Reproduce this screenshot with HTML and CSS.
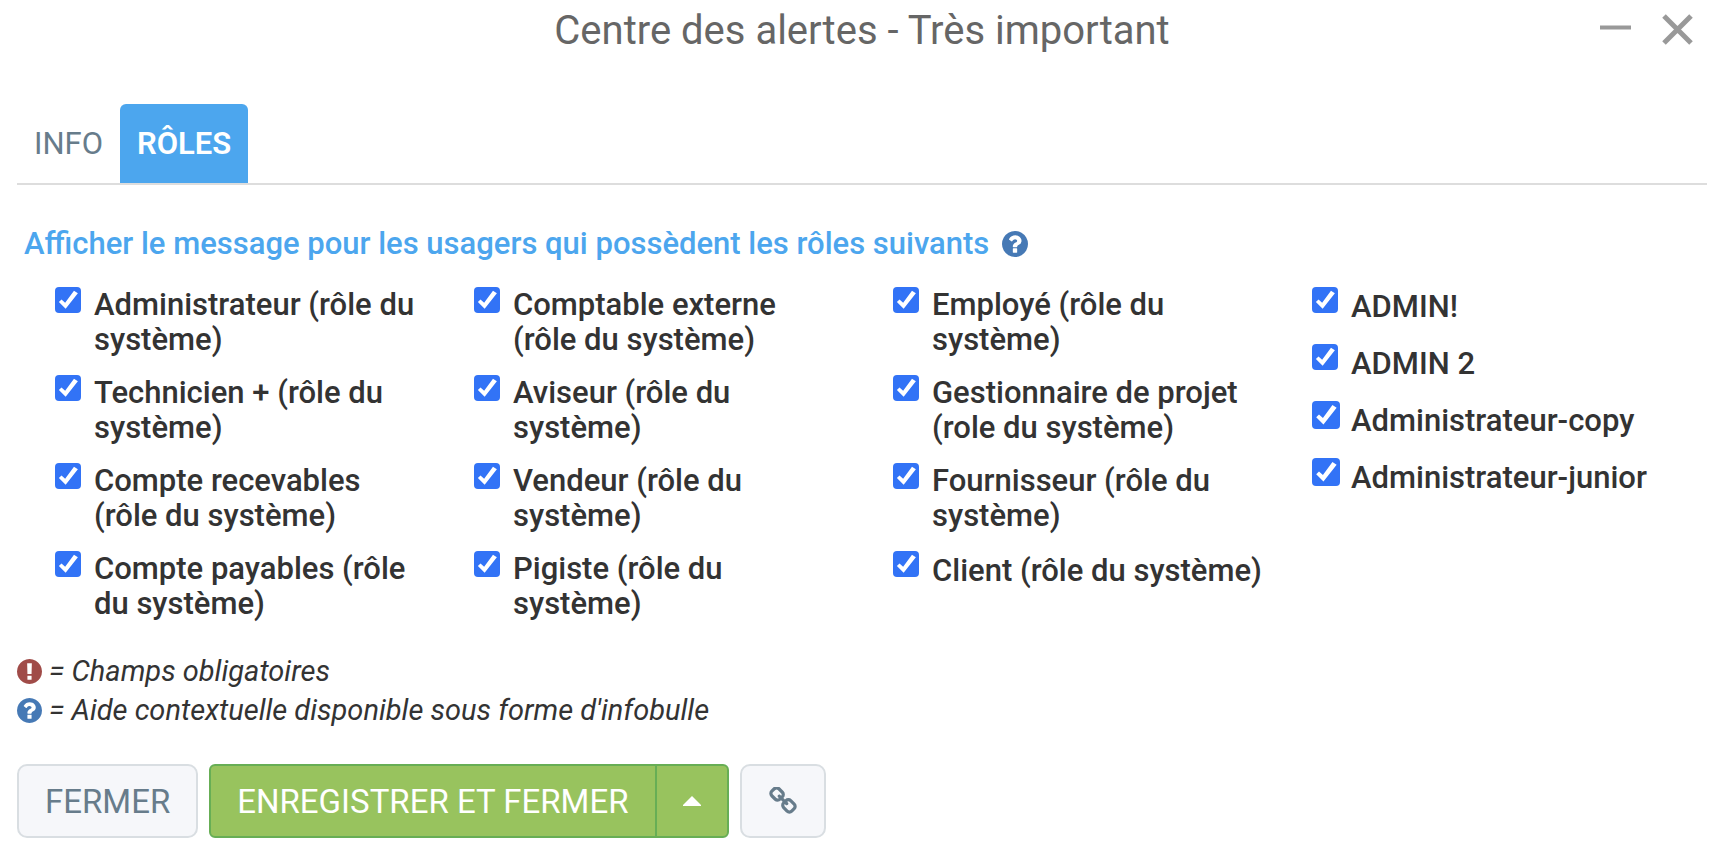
FILE: index.html
```html
<!DOCTYPE html>
<html lang="fr">
<head>
    <meta charset="UTF-8">
    <meta name="viewport" content="width=device-width, initial-scale=1.0">
    <title>Centre des alertes</title>
    <link rel="stylesheet" href="styles.css">
</head>
<body>
    <!-- icons used more than once -->
    <svg class="sprite" aria-hidden="true">
        <symbol id="icon-help" viewBox="128 128 1536 1536">
            <path d="M1024 1376v-192q0-14-9-23t-23-9h-192q-14 0-23 9t-9 23v192q0 14 9 23t23 9h192q14 0 23-9t9-23zm256-672q0-88-55.5-163t-138.5-116-170-41q-243 0-371 213-15 24 8 42l132 100q7 6 19 6 16 0 25-12 53-68 86-92 34-24 86-24 48 0 85.5 26t37.5 59q0 38-20 61t-68 45q-63 28-115.5 86.5t-52.5 125.5v36q0 14 9 23t23 9h192q14 0 23-9t9-23q0-19 21.5-49.5t54.5-49.5q32-18 49-28.5t46-35 44.5-48 28-60.5 12.5-81zm384 192q0 209-103 385.5t-279.5 279.5-385.5 103-385.5-103-279.5-279.5-103-385.5 103-385.5 279.5-279.5 385.5-103 385.5 103 279.5 279.5 103 385.5z"/>
        </symbol>
    </svg>

    <div class="modal">
        <header class="modal-header">
            <h1>Centre des alertes - Très important</h1>
            <div class="window-actions">
                <button type="button" aria-label="Réduire">
                    <svg width="32" height="32" viewBox="0 0 32 32"><path d="M0 13.500h31" stroke="#999" stroke-width="4"/></svg>
                </button>
                <button type="button" aria-label="Fermer">
                    <svg width="32" height="32" viewBox="0 0 32 32"><path d="M3 2l27 27M30 2L3 29" stroke="#999" stroke-width="5"/></svg>
                </button>
            </div>
        </header>

        <nav class="tabs">
            <a href="#info">INFO</a>
            <a href="#roles" class="active">RÔLES</a>
        </nav>

        <form class="roles" id="roles">
            <h2>Afficher le message pour les usagers qui possèdent les rôles suivants <svg class="icon-help"><use href="#icon-help"/></svg></h2>
            <div class="role-columns">
                <div class="role-column">
                    <label><input type="checkbox" checked><span>Administrateur (rôle du système)</span></label>
                    <label><input type="checkbox" checked><span>Technicien + (rôle du système)</span></label>
                    <label><input type="checkbox" checked><span>Compte recevables (rôle du système)</span></label>
                    <label><input type="checkbox" checked><span>Compte payables (rôle du système)</span></label>
                </div>
                <div class="role-column">
                    <label><input type="checkbox" checked><span>Comptable externe (rôle du système)</span></label>
                    <label><input type="checkbox" checked><span>Aviseur (rôle du système)</span></label>
                    <label><input type="checkbox" checked><span>Vendeur (rôle du système)</span></label>
                    <label><input type="checkbox" checked><span>Pigiste (rôle du système)</span></label>
                </div>
                <div class="role-column">
                    <label><input type="checkbox" checked><span>Employé (rôle du système)</span></label>
                    <label><input type="checkbox" checked><span>Gestionnaire de projet (role du système)</span></label>
                    <label><input type="checkbox" checked><span>Fournisseur (rôle du système)</span></label>
                    <label class="single"><input type="checkbox" checked><span>Client (rôle du système)</span></label>
                </div>
                <div class="role-column">
                    <label class="single"><input type="checkbox" checked><span>ADMIN!</span></label>
                    <label class="single"><input type="checkbox" checked><span>ADMIN 2</span></label>
                    <label class="single large"><input type="checkbox" checked><span>Administrateur-copy</span></label>
                    <label class="single large"><input type="checkbox" checked><span>Administrateur-junior</span></label>
                </div>
            </div>
        </form>

        <div class="legend">
            <p>
                <svg class="icon-required" viewBox="128 128 1536 1536"><path d="M896 128q209 0 385.5 103t279.5 279.5 103 385.5-103 385.5-279.5 279.5-385.5 103-385.5-103-279.5-279.5-103-385.5 103-385.5 279.5-279.5 385.5-103zm128 1247v-190q0-14-9-23.5t-22-9.5h-192q-13 0-23 10t-10 23v190q0 13 10 23t23 10h192q13 0 22-9.5t9-23.5zm-2-344l18-621q0-12-10-18-10-8-24-8h-220q-14 0-24 8-10 6-10 18l17 621q0 10 10 17.5t24 7.5h185q14 0 23.5-7.5t10.5-17.5z"/></svg>
                = Champs obligatoires
            </p>
            <p>
                <svg class="icon-help"><use href="#icon-help"/></svg>
                = Aide contextuelle disponible sous forme d'infobulle
            </p>
        </div>

        <footer class="actions">
            <button type="button" class="btn">FERMER</button>
            <div class="btn-group">
                <button type="button" class="btn btn-success">ENREGISTRER ET FERMER</button>
                <button type="button" class="btn btn-success btn-caret" aria-label="Plus d'options">
                    <svg width="18" height="10" viewBox="0 0 18 10"><path d="M9 0l9 9v1H0V9z" fill="#fff"/></svg>
                </button>
            </div>
            <button type="button" class="btn btn-link" aria-label="Lien">
                <svg width="28" height="28" viewBox="64 64 1664 1664"><path fill="#677c8b" d="M1520 1216q0-40-28-68l-208-208q-28-28-68-28-42 0-72 32 3 3 19 18.500t21.500 21.500 15 19 13 25.500 3.500 27.500q0 40-28 68t-68 28q-15 0-27.500-3.500t-25.500-13-19-15-21.500-21.500-18.500-19q-33 31-33 73 0 40 28 68l206 207q27 27 68 27 40 0 68-26l147-146q28-28 28-67zm-703-705q0-40-28-68l-206-207q-28-28-68-28-39 0-68 27l-147 146q-28 28-28 67 0 40 28 68l208 208q27 27 68 27 42 0 72-31-3-3-19-18.500t-21.500-21.500-15-19-13-25.500-3.500-27.500q0-40 28-68t68-28q15 0 27.500 3.500t25.500 13 19 15 21.500 21.500 18.500 19q33-31 33-73zm895 705q0 120-85 203l-147 146q-83 83-203 83-121 0-204-85l-206-207q-83-83-83-203 0-123 88-209l-88-88q-86 88-208 88-120 0-204-84l-208-208q-84-84-84-204t85-203l147-146q83-83 203-83 121 0 204 85l206 207q83 83 83 203 0 123-88 209l88 88q86-88 208-88 120 0 204 84l208 208q84 84 84 204z"/></svg>
            </button>
        </footer>
    </div>
</body>
</html>
```
FILE: styles.css
```css
* {
    box-sizing: border-box;
}

body {
    margin: 0;
    background-color: #fff;
    color: #333;
    font-family: Roboto, sans-serif;
    font-size: 31px;
}

h1, h2, p {
    margin: 0;
}

.sprite {
    display: none;
}

.modal {
    padding: 0 17px 12px;
}

/* header */
.modal-header {
    display: grid;
    grid-template-columns: 1fr auto 1fr;
    align-items: center;
    height: 60px;
    margin-bottom: 44px;
}

.modal-header h1 {
    grid-column: 2;
    color: #666;
    font-size: 40px;
    font-weight: 400;
}

.window-actions {
    display: flex;
    justify-content: flex-end;
    gap: 29px;
    padding-right: 14px;
}

.window-actions button {
    padding: 0;
    border: 0;
    background: none;
    line-height: 0;
    cursor: pointer;
}

/* tabs */
.tabs {
    display: flex;
    border-bottom: 2px solid #ddd;
}

.tabs a {
    padding: 0 17px;
    border-radius: 6px 6px 0 0;
    color: #677c8b;
    line-height: 79px;
    text-decoration: none;
}

.tabs .active {
    background-color: #4ca6ee;
    color: #fff;
    font-weight: 600;
}

/* roles */
.roles {
    padding: 39px 7px 0;
}

.roles h2 {
    display: flex;
    align-items: center;
    gap: 13px;
    margin-bottom: 23px;
    color: #4ca6ee;
    font-size: 31px;
    font-weight: 500;
    line-height: 40px;
}

.icon-help {
    width: 26px;
    height: 26px;
    fill: #4679b5;
}

.icon-required {
    fill: #a04b48;
}

.role-columns {
    display: grid;
    grid-template-columns: repeat(4, 1fr);
}

.role-column {
    padding: 0 17px 0 31px;
}

.role-column label {
    display: grid;
    grid-template-columns: 26px 1fr;
    gap: 13px;
    margin-bottom: 18px;
    font-weight: 500;
    line-height: 35px;
}

.role-column .single {
    line-height: 39px;
}

.role-column input {
    appearance: none;
    width: 26px;
    height: 26px;
    margin: 0;
    border: 1px solid #767676;
    border-radius: 4px;
}

.role-column .large input {
    width: 28px;
    height: 28px;
}

.role-column input:checked {
    border: 0;
    background-color: #3273f6;
}

.role-column input:checked::before {
    content: "";
    display: block;
    height: 100%;
    background-color: #fff;
    clip-path: polygon(15% 58%, 25% 48%, 39% 61%, 73% 14%, 88% 24%, 41% 84%);
}

/* legend */
.legend {
    margin-top: 13px;
    font-size: 29px;
    font-style: italic;
    line-height: 39px;
}

.legend p {
    display: flex;
    align-items: center;
    gap: 7px;
}

.legend svg {
    width: 25px;
    height: 25px;
}

/* buttons */
.actions {
    display: flex;
    gap: 11px;
    margin-top: 34px;
}

.btn-group {
    display: flex;
}

.btn {
    display: flex;
    align-items: center;
    justify-content: center;
    height: 74px;
    padding: 0 26px;
    border: 2px solid #d9dee2;
    border-radius: 10px;
    background-color: #f6f7fa;
    color: #677c8b;
    font-family: inherit;
    font-size: 33px;
    cursor: pointer;
}

.btn-success {
    border-color: #67ae55;
    border-radius: 6px 0 0 6px;
    background-color: #98c35e;
    color: #fff;
}

.btn-caret {
    width: 74px;
    margin-left: -2px;
    border-radius: 0 6px 6px 0;
}

.btn-link {
    width: 86px;
}
```
